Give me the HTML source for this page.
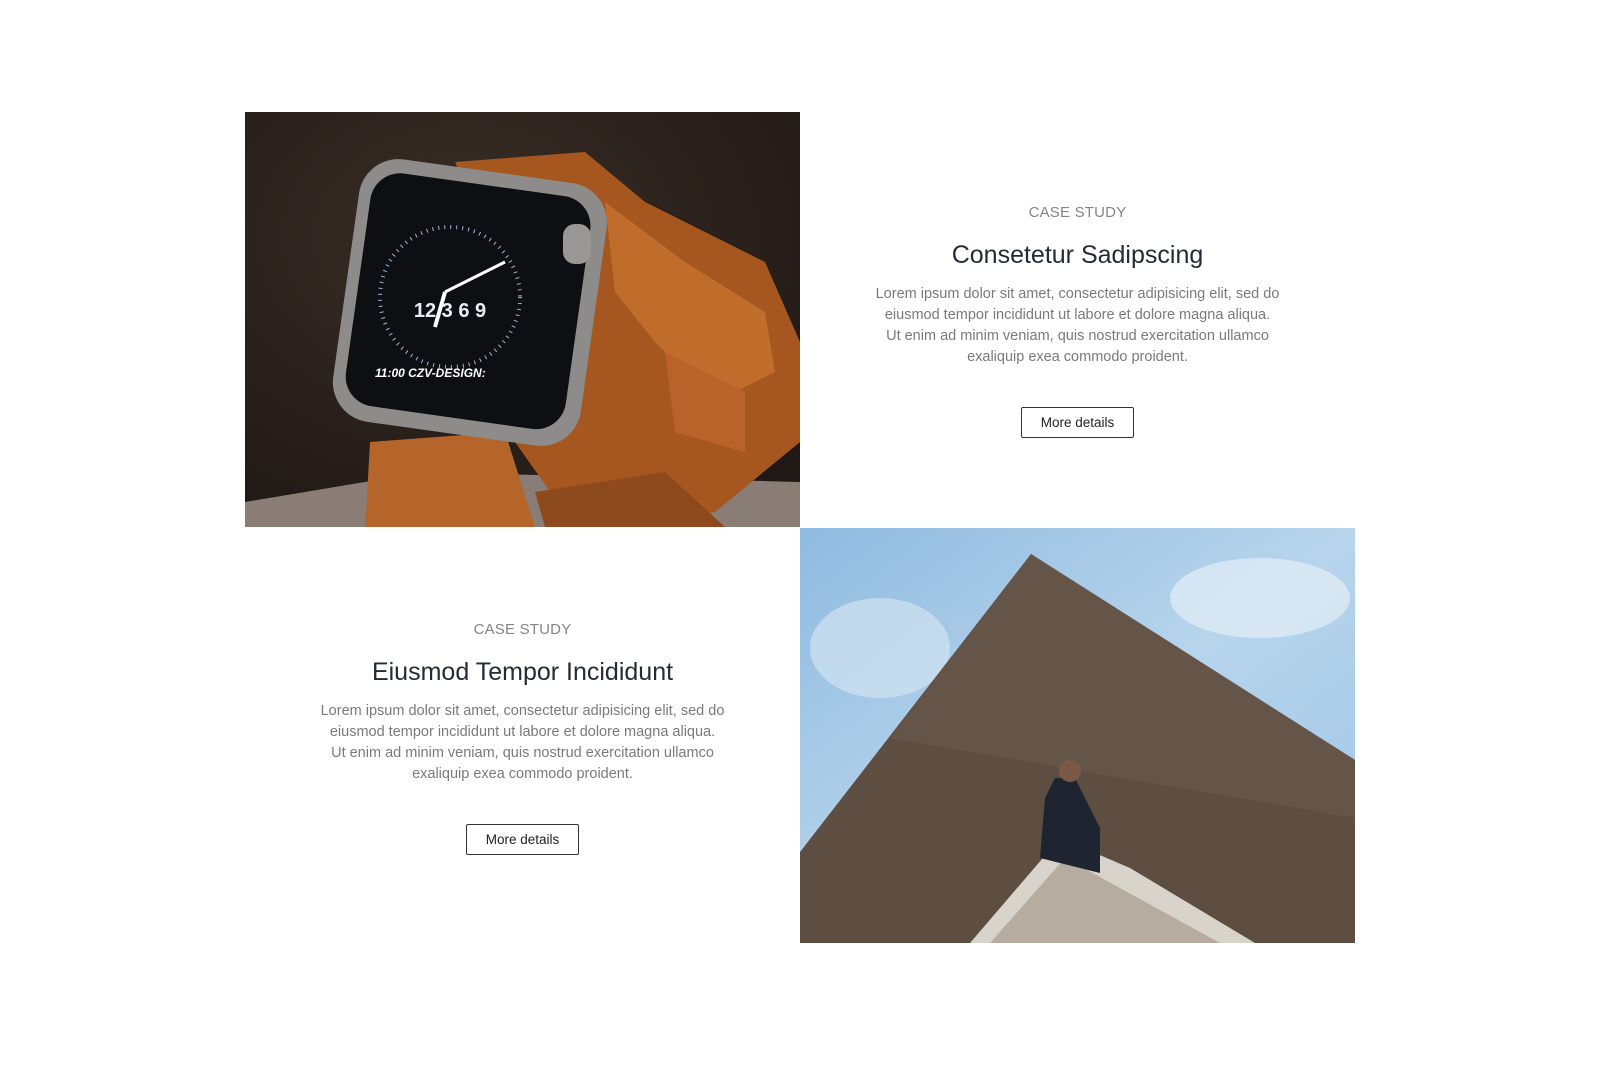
<!DOCTYPE html>
<html><head><meta charset="utf-8"><style>
html,body{margin:0;padding:0;background:#fff;}
body{width:1600px;height:1080px;position:relative;overflow:hidden;font-family:"Liberation Sans",sans-serif;}
.img{position:absolute;width:555px;height:415px;overflow:hidden}
.txt{position:absolute;width:555px;text-align:center}
.cs{font-size:15px;color:#858585;letter-spacing:0.2px;line-height:20px}
.t{font-size:25px;color:#262a36;margin-top:17px;line-height:30px}
.p{font-size:14.5px;color:#7a7a7a;line-height:21px;margin:14px auto 0;width:460px;white-space:nowrap}
.b{display:inline-block;margin-top:39px;width:111px;height:29px;border:1px solid #333;border-radius:2px;font-size:13.5px;color:#222;line-height:29px;box-sizing:content-box}
</style></head><body>
<div class="img" style="left:245px;top:112px">
<svg width="555" height="415" viewBox="0 0 555 415">
<defs><radialGradient id="bg" cx="0.4" cy="0.3" r="0.8"><stop offset="0" stop-color="#3a2d26"/><stop offset="1" stop-color="#1f1814"/></radialGradient></defs>
<rect width="555" height="415" fill="url(#bg)"/>
<path d="M0 390 L180 360 L555 370 L555 415 L0 415Z" fill="#8a7d75"/>
<path d="M210 50 L340 40 L400 90 L520 150 L555 230 L555 330 L470 400 L330 415 L270 330 L240 330 L260 300 L200 260 L250 140Z" fill="#a5571f"/>
<path d="M360 90 L440 150 L520 200 L530 260 L470 290 L410 230 L370 180Z" fill="#c06c2b"/>
<path d="M420 240 L500 280 L500 340 L430 320Z" fill="#b9632a"/>
<path d="M120 420 L125 330 L260 320 L290 415Z" fill="#b5652a"/>
<path d="M290 380 L420 360 L480 415 L300 415Z" fill="#8d4a1c"/>
<rect x="100" y="58" width="250" height="265" rx="40" fill="#8e8c8a" transform="rotate(8 225 190)"/>
<rect x="112" y="72" width="222" height="235" rx="30" fill="#0e0f13" transform="rotate(8 225 190)"/>
<circle cx="205" cy="185" r="70" fill="none" stroke="#9fb6d6" stroke-width="4" stroke-dasharray="1 5"/>
<text x="205" y="205" font-size="20" fill="#e8eef8" text-anchor="middle" font-weight="bold">12 3 6 9</text>
<line x1="200" y1="180" x2="190" y2="215" stroke="#fff" stroke-width="4"/>
<line x1="200" y1="180" x2="260" y2="150" stroke="#fff" stroke-width="3"/>
<text x="130" y="265" font-size="12" fill="#fff" font-style="italic" font-weight="bold">11:00 CZV-DESIGN:</text>
<rect x="318" y="112" width="28" height="40" rx="12" fill="#9a9896"/>
</svg></div>
<div class="txt" style="left:800px;top:203px">
<div class="cs">CASE STUDY</div>
<div class="t">Consetetur Sadipscing</div>
<div class="p">Lorem ipsum dolor sit amet, consectetur adipisicing elit, sed do<br>eiusmod tempor incididunt ut labore et dolore magna aliqua.<br>Ut enim ad minim veniam, quis nostrud exercitation ullamco<br>exaliquip exea commodo proident.</div>
<div class="b">More details</div>
</div>
<div class="txt" style="left:245px;top:620px">
<div class="cs">CASE STUDY</div>
<div class="t">Eiusmod Tempor Incididunt</div>
<div class="p">Lorem ipsum dolor sit amet, consectetur adipisicing elit, sed do<br>eiusmod tempor incididunt ut labore et dolore magna aliqua.<br>Ut enim ad minim veniam, quis nostrud exercitation ullamco<br>exaliquip exea commodo proident.</div>
<div class="b">More details</div>
</div>
<div class="img" style="left:800px;top:528px">
<svg width="555" height="415" viewBox="0 0 555 415">
<defs><linearGradient id="sky" x1="0" y1="0" x2="1" y2="1"><stop offset="0" stop-color="#8fbbe0"/><stop offset="0.5" stop-color="#b7d4ec"/><stop offset="1" stop-color="#9cc6e6"/></linearGradient></defs>
<rect width="555" height="415" fill="url(#sky)"/>
<ellipse cx="460" cy="70" rx="90" ry="40" fill="#e4eef7" opacity="0.7"/>
<ellipse cx="80" cy="120" rx="70" ry="50" fill="#dbe8f4" opacity="0.6"/>
<path d="M231 26 L0 324 L0 415 L555 415 L555 232Z" fill="#5e4e42"/>
<path d="M231 26 L90 210 L555 290 L555 232Z" fill="#6a5a4d" opacity="0.6"/>
<path d="M170 415 L260 310 L330 340 L455 415Z" fill="#d8d4cc"/>
<path d="M190 415 L265 330 L320 360 L420 415Z" fill="#b6ada0"/>
<path d="M245 270 L255 250 L275 250 L285 270 L300 300 L300 345 L240 330Z" fill="#1e2430"/>
<circle cx="270" cy="243" r="11" fill="#7a5a44"/>
</svg></div>
</body></html>
